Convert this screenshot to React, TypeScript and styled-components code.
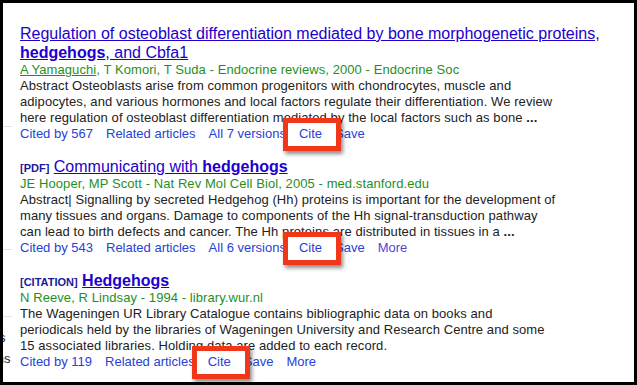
import React from "react";
import styled, { createGlobalStyle } from "styled-components";

const GlobalStyle = createGlobalStyle`
  html, body {
    margin: 0;
    padding: 0;
    background: #fff;
  }
  body {
    font-family: "Liberation Sans", Arial, sans-serif;
  }
`;

const Frame = styled.div`
  width: 637px;
  height: 385px;
  box-sizing: border-box;
  border: 3px solid #000;
  background: #fff;
  overflow: hidden;
`;

// the sidebar is mostly cropped off the left edge of the shot
const Page = styled.div`
  display: flex;
  margin-left: -85px;
  height: 100%;
`;

const Sidebar = styled.div`
  width: 94px;
  flex-shrink: 0;
  display: flex;
  flex-direction: column;
`;

const SideRule = styled.div<{ $top: number }>`
  height: 1px;
  margin-top: ${(p) => p.$top}px;
  background: #e4e4e4;
`;

const SideLabel = styled.div<{ $top: number }>`
  margin-top: ${(p) => p.$top}px;
  font-size: 13px;
  line-height: 16px;
  color: #222;
  white-space: nowrap;
`;

const Results = styled.div`
  flex: 1;
  padding: 21px 0 0 8px;
`;

const Result = styled.div`
  margin-bottom: 15px;
`;

const Title = styled.div`
  font-size: 16px;
  line-height: 19px;
  white-space: nowrap;
`;

const TitleLink = styled.a`
  color: #2200cc;
  text-decoration: underline;
  cursor: pointer;

  b {
    font-weight: bold;
  }
`;

const Tag = styled.span`
  font-size: 11px;
  line-height: 12px;
  font-weight: bold;
  color: #1a1a99;
`;

const Meta = styled.div`
  font-size: 13px;
  line-height: 16px;
  letter-spacing: 0.08px;
  color: #1f8f1f;
  white-space: nowrap;

  a {
    color: inherit;
    text-decoration: underline;
  }
`;

const Snippet = styled.div`
  font-size: 13px;
  line-height: 16px;
  letter-spacing: 0.08px;
  color: #222;

  span {
    display: block;
    white-space: nowrap;
  }
`;

const Actions = styled.div`
  display: flex;
  gap: 13px;
  font-size: 13px;
  line-height: 16px;
  white-space: nowrap;
`;

const ActionLink = styled.a<{ $visited?: boolean; $marked?: boolean }>`
  color: ${(p) => (p.$visited ? "#5a3fd6" : "#2841d6")};
  text-decoration: none;
  cursor: pointer;
  position: ${(p) => (p.$marked ? "relative" : "static")};
  z-index: ${(p) => (p.$marked ? 1 : "auto")};

  &::before {
    content: "";
    display: ${(p) => (p.$marked ? "block" : "none")};
    position: absolute;
    top: -8px;
    bottom: -9px;
    left: -16px;
    right: -19px;
    z-index: -1;
    background: #fff;
    border: 5px solid #f0371a;
    box-shadow: 2px 3px 4px rgba(0, 0, 0, 0.45);
  }
`;

type Action = { label: string; marked?: boolean; visited?: boolean };

type Entry = {
  tag?: string;
  title: React.ReactNode;
  meta: React.ReactNode;
  lines: string[];
  more: boolean;
  actions: Action[];
};

const entries: Entry[] = [
  {
    title: (
      <>
        Regulation of osteoblast differentiation mediated by bone morphogenetic proteins,
        <br />
        <b>hedgehogs</b>, and Cbfa1
      </>
    ),
    meta: (
      <>
        <a>A Yamaguchi</a>, T Komori, T Suda - Endocrine reviews, 2000 - Endocrine Soc
      </>
    ),
    lines: [
      "Abstract Osteoblasts arise from common progenitors with chondrocytes, muscle and",
      "adipocytes, and various hormones and local factors regulate their differentiation. We review",
      "here regulation of osteoblast differentiation mediated by the local factors such as bone",
    ],
    more: true,
    actions: [
      { label: "Cited by 567" },
      { label: "Related articles" },
      { label: "All 7 versions" },
      { label: "Cite", marked: true },
      { label: "Save" },
    ],
  },
  {
    tag: "[PDF]",
    title: (
      <>
        Communicating with <b>hedgehogs</b>
      </>
    ),
    meta: <>JE Hooper, MP Scott - Nat Rev Mol Cell Biol, 2005 - med.stanford.edu</>,
    lines: [
      "Abstract| Signalling by secreted Hedgehog (Hh) proteins is important for the development of",
      "many tissues and organs. Damage to components of the Hh signal-transduction pathway",
      "can lead to birth defects and cancer. The Hh proteins are distributed in tissues in a",
    ],
    more: true,
    actions: [
      { label: "Cited by 543" },
      { label: "Related articles" },
      { label: "All 6 versions" },
      { label: "Cite", marked: true },
      { label: "Save" },
      { label: "More", visited: true },
    ],
  },
  {
    tag: "[CITATION]",
    title: <b>Hedgehogs</b>,
    meta: <>N Reeve, R Lindsay - 1994 - library.wur.nl</>,
    lines: [
      "The Wageningen UR Library Catalogue contains bibliographic data on books and",
      "periodicals held by the libraries of Wageningen University and Research Centre and some",
      "15 associated libraries. Holding data are added to each record.",
    ],
    more: false,
    actions: [
      { label: "Cited by 119" },
      { label: "Related articles" },
      { label: "Cite", marked: true },
      { label: "Save" },
      { label: "More" },
    ],
  },
];

export default function App() {
  return (
    <>
      <GlobalStyle />
      <Frame>
        <Page>
          <Sidebar>
            <SideRule $top={123} />
            <SideRule $top={122} />
            <SideRule $top={66} />
            <SideLabel $top={13}>include patents</SideLabel>
            <SideLabel $top={5}>include citations</SideLabel>
          </Sidebar>
          <Results>
            {entries.map((e, i) => (
              <Result key={i}>
                <Title>
                  {e.tag && <Tag>{e.tag}</Tag>}
                  {e.tag && " "}
                  <TitleLink>{e.title}</TitleLink>
                </Title>
                <Meta>{e.meta}</Meta>
                <Snippet>
                  {e.lines.map((line, j) => (
                    <span key={j}>
                      {line}
                      {e.more && j === e.lines.length - 1 && <b> ...</b>}
                    </span>
                  ))}
                </Snippet>
                <Actions>
                  {e.actions.map((a) => (
                    <ActionLink key={a.label} $marked={a.marked} $visited={a.visited}>
                      {a.label}
                    </ActionLink>
                  ))}
                </Actions>
              </Result>
            ))}
          </Results>
        </Page>
      </Frame>
    </>
  );
}
